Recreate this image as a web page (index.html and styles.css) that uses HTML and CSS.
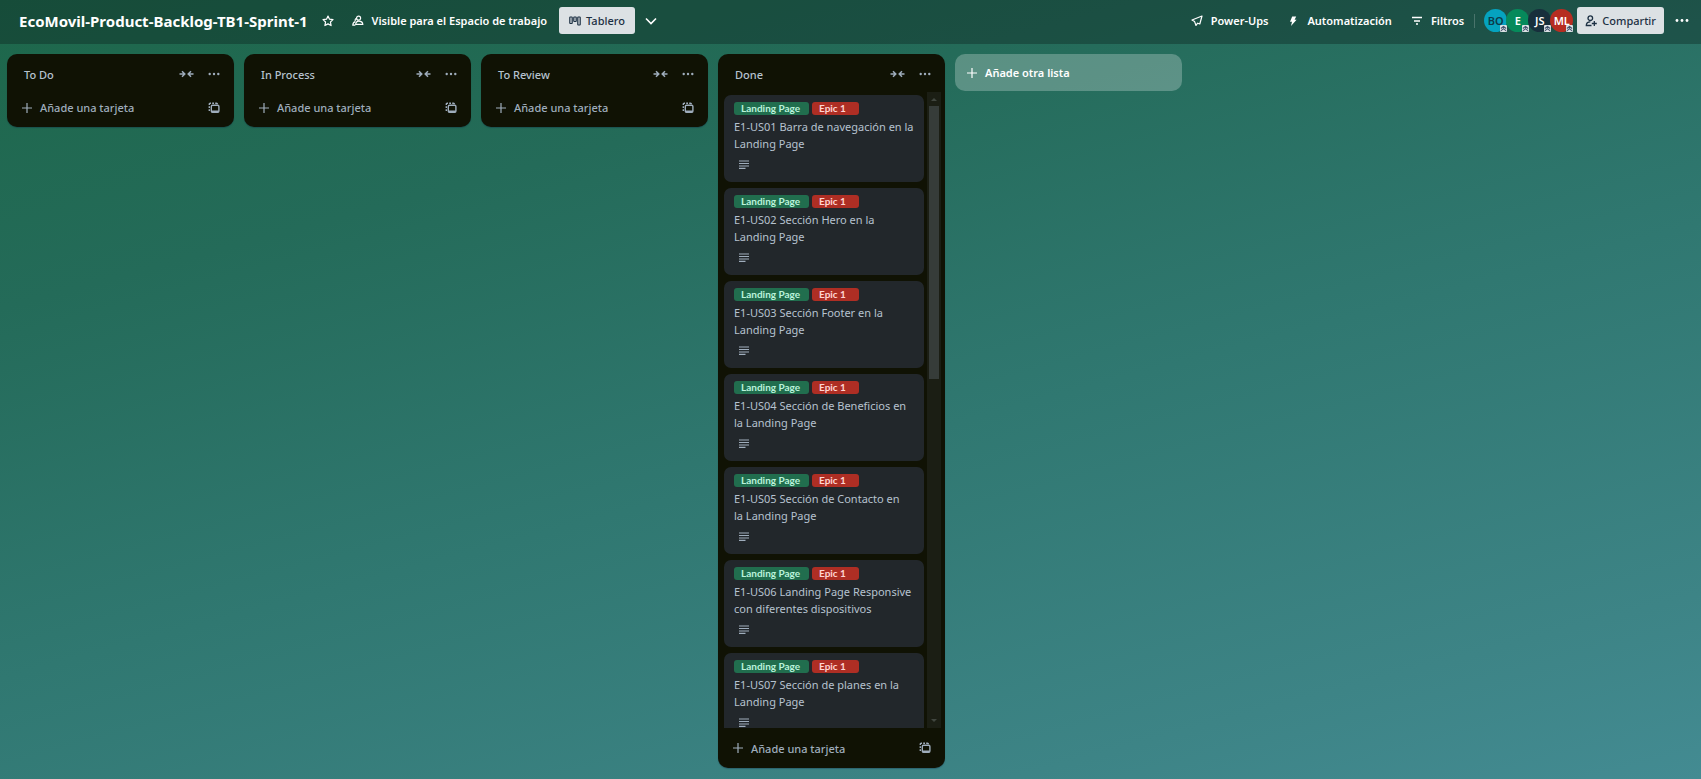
FILE: index.html
```html
<!DOCTYPE html>
<html lang="es">
<head>
<meta charset="utf-8">
<meta name="viewport" content="width=device-width, initial-scale=1">
<title>EcoMovil-Product-Backlog-TB1-Sprint-1</title>
<link rel="stylesheet" href="styles.css">
</head>
<body>
<svg class="sprite" aria-hidden="true">
  <symbol id="i-collapse" viewBox="0 0 15 10"><path d="M.5 5H6M3 2.200L5.800 5 3 7.800M14.500 5H9M12 2.200L9.200 5 12 7.800" fill="none" stroke="currentColor" stroke-width="1.500"/></symbol>
  <symbol id="i-dots" viewBox="0 0 12 4"><circle cx="1.7" cy="2" r="1.2"/><circle cx="6" cy="2" r="1.2"/><circle cx="10.3" cy="2" r="1.2"/></symbol>
  <symbol id="i-plus" viewBox="0 0 10 10"><path d="M5 0v10M0 5h10" fill="none" stroke="currentColor" stroke-width="1.2"/></symbol>
  <symbol id="i-template" viewBox="0 0 12 12"><rect x="3.300" y="3.300" width="7.600" height="7" rx="1.200" fill="none" stroke="currentColor" stroke-width="1.400"/><path d="M3.500 8.500h7.200v1.800H3.500z"/><path d="M1.300 9V7.200M1.300 6V4.200M1.300 3V2.200q0-.9.9-.9H3M4.200 1.300H6M7.200 1.300h1.300q.9 0 .9.900" fill="none" stroke="currentColor" stroke-width="1.400"/></symbol>
  <symbol id="i-desc" viewBox="0 0 10 9"><path d="M0 1h10M0 3.5h10M0 6h10M0 8.4h6.500" fill="none" stroke="currentColor" stroke-width="1.2"/></symbol>
  <symbol id="i-admin" viewBox="0 0 8 8"><path d="M1 4l3-2.500L7 4M1 6.700l3-2.500 3 2.500" fill="none" stroke="currentColor" stroke-width="1.200"/></symbol>
</svg>

<header class="topbar">
  <div class="group">
    <h1 class="board-name">EcoMovil-Product-Backlog-TB1-Sprint-1</h1>
    <button class="ghost star" type="button" aria-label="Marcar como favorito"><svg width="12" height="12" viewBox="0 0 12 12"><path d="M6 1l1.500 3.200 3.500.45-2.550 2.400.65 3.500L6 8.850l-3.100 1.700.65-3.500L1 4.650l3.500-.45z" fill="none" stroke="currentColor" stroke-width="1.200" stroke-linejoin="round"/></svg></button>
    <button class="ghost" type="button"><svg width="12" height="12" viewBox="0 0 12 12"><g fill="none" stroke="currentColor" stroke-width="1.200"><circle cx="6.600" cy="3.200" r="2"/><path d="M3.700 9.400C3.700 7.200 5 6.200 6.800 6.200s4 1 4 3.200z"/><path d="M4.700 3.600C3.200 3.400 2.800 5 3.400 6.300M3.400 6.600C1.800 7 .8 8.300.8 10.200h2.600"/></g></svg>Visible para el Espacio de trabajo</button>
    <button class="solid" type="button"><svg width="12" height="12" viewBox="0 0 12 12"><g fill="none" stroke="currentColor" stroke-width="1.200"><rect x=".8" y="2" width="2.400" height="6.500" rx=".5"/><rect x="4.800" y="2" width="2.400" height="4.500" rx=".5"/><rect x="8.800" y="2" width="2.400" height="8" rx=".5"/></g></svg>Tablero</button>
    <button class="ghost" type="button" aria-label="Vistas"><svg width="12" height="12" viewBox="0 0 12 12"><path d="M1 3.500l5 5 5-5" fill="none" stroke="currentColor" stroke-width="1.600"/></svg></button>
  </div>
  <div class="group tools">
    <button class="ghost" type="button"><svg width="12" height="12" viewBox="0 0 12 12"><path d="M11 1L1 5l2.600 1.600L5 10.500l1.600-2.300L8.800 9z" fill="none" stroke="currentColor" stroke-width="1.200" stroke-linejoin="round"/></svg>Power-Ups</button>
    <button class="ghost" type="button"><svg width="12" height="12" viewBox="0 0 12 12"><path d="M5.200 1.500h4L7.600 4.800h2L4 11l1-4.300H3z" fill="currentColor"/></svg>Automatización</button>
    <button class="ghost" type="button"><svg width="12" height="12" viewBox="0 0 12 12"><path d="M1 2.500h10M3 6h6M5 9h2" fill="none" stroke="currentColor" stroke-width="1.400"/></svg>Filtros</button>
    <span class="divider"></span>
    <div class="members">
      <span class="avatar bo">BO<svg class="badge"><use href="#i-admin"/></svg></span>
      <span class="avatar e">E<svg class="badge"><use href="#i-admin"/></svg></span>
      <span class="avatar js">JS<svg class="badge"><use href="#i-admin"/></svg></span>
      <span class="avatar ml">ML<svg class="badge"><use href="#i-admin"/></svg></span>
    </div>
    <button class="solid share" type="button"><svg width="12" height="12" viewBox="0 0 12 12"><g fill="none" stroke="currentColor" stroke-width="1.300"><circle cx="5.300" cy="3.200" r="2.300"/><path d="M6.500 10.500H1.300C1.300 8 2.600 6.900 5.300 6.900M9.300 6v5M6.800 8.500h5"/></g></svg>Compartir</button>
    <button class="ghost more" type="button" aria-label="Menú"><svg width="14" height="5" viewBox="0 0 12 4" fill="currentColor"><use href="#i-dots"/></svg></button>
  </div>
</header>

<main class="board">
  <section class="list">
    <div class="list-head"><h2>To Do</h2><button type="button" aria-label="Contraer"><svg class="collapse"><use href="#i-collapse"/></svg></button><button type="button" aria-label="Acciones"><svg class="dots"><use href="#i-dots"/></svg></button></div>
    <div class="list-foot"><button class="add" type="button"><svg class="plus"><use href="#i-plus"/></svg>Añade una tarjeta</button><button type="button" aria-label="Plantilla"><svg class="template"><use href="#i-template"/></svg></button></div>
  </section>
  <section class="list">
    <div class="list-head"><h2>In Process</h2><button type="button" aria-label="Contraer"><svg class="collapse"><use href="#i-collapse"/></svg></button><button type="button" aria-label="Acciones"><svg class="dots"><use href="#i-dots"/></svg></button></div>
    <div class="list-foot"><button class="add" type="button"><svg class="plus"><use href="#i-plus"/></svg>Añade una tarjeta</button><button type="button" aria-label="Plantilla"><svg class="template"><use href="#i-template"/></svg></button></div>
  </section>
  <section class="list">
    <div class="list-head"><h2>To Review</h2><button type="button" aria-label="Contraer"><svg class="collapse"><use href="#i-collapse"/></svg></button><button type="button" aria-label="Acciones"><svg class="dots"><use href="#i-dots"/></svg></button></div>
    <div class="list-foot"><button class="add" type="button"><svg class="plus"><use href="#i-plus"/></svg>Añade una tarjeta</button><button type="button" aria-label="Plantilla"><svg class="template"><use href="#i-template"/></svg></button></div>
  </section>
  <section class="list">
    <div class="list-head"><h2>Done</h2><button type="button" aria-label="Contraer"><svg class="collapse"><use href="#i-collapse"/></svg></button><button type="button" aria-label="Acciones"><svg class="dots"><use href="#i-dots"/></svg></button></div>
    <div class="scroll">
      <div class="cards">
        <article class="card"><div class="labels"><span class="label green">Landing Page</span><span class="label red">Epic 1</span></div><p>E1-US01 Barra de navegación en la Landing Page</p><svg class="desc"><use href="#i-desc"/></svg></article>
        <article class="card"><div class="labels"><span class="label green">Landing Page</span><span class="label red">Epic 1</span></div><p>E1-US02 Sección Hero en la Landing Page</p><svg class="desc"><use href="#i-desc"/></svg></article>
        <article class="card"><div class="labels"><span class="label green">Landing Page</span><span class="label red">Epic 1</span></div><p>E1-US03 Sección Footer en la Landing Page</p><svg class="desc"><use href="#i-desc"/></svg></article>
        <article class="card"><div class="labels"><span class="label green">Landing Page</span><span class="label red">Epic 1</span></div><p>E1-US04 Sección de Beneficios en la Landing Page</p><svg class="desc"><use href="#i-desc"/></svg></article>
        <article class="card"><div class="labels"><span class="label green">Landing Page</span><span class="label red">Epic 1</span></div><p>E1-US05 Sección de Contacto en<br>la Landing Page</p><svg class="desc"><use href="#i-desc"/></svg></article>
        <article class="card"><div class="labels"><span class="label green">Landing Page</span><span class="label red">Epic 1</span></div><p>E1-US06 Landing Page Responsive con diferentes dispositivos</p><svg class="desc"><use href="#i-desc"/></svg></article>
        <article class="card"><div class="labels"><span class="label green">Landing Page</span><span class="label red">Epic 1</span></div><p>E1-US07 Sección de planes en la Landing Page</p><svg class="desc"><use href="#i-desc"/></svg></article>
      </div>
      <div class="track" aria-hidden="true"><span class="arrow up"></span><span class="thumb"></span><span class="arrow down"></span></div>
    </div>
    <div class="list-foot"><button class="add" type="button"><svg class="plus"><use href="#i-plus"/></svg>Añade una tarjeta</button><button type="button" aria-label="Plantilla"><svg class="template"><use href="#i-template"/></svg></button></div>
  </section>
  <button class="add-list" type="button"><svg class="plus"><use href="#i-plus"/></svg>Añade otra lista</button>
</main>
</body>
</html>
```
FILE: styles.css
```css
* { box-sizing: border-box; }

body {
  margin: 0;
  height: 100vh;
  display: flex;
  flex-direction: column;
  overflow: hidden;
  background: linear-gradient(165deg, #1d674a 0%, #246b59 25%, #307871 55%, #3d8486 85%, #438b92 100%);
  color: #b6c2cf;
  font: 11px/17px "Noto Sans", "Open Sans", sans-serif;
}

.sprite { position: absolute; width: 0; height: 0; }

h1, h2, p { margin: 0; }

button {
  margin: 0;
  padding: 0;
  border: 0;
  background: none;
  color: inherit;
  font: inherit;
  display: flex;
  align-items: center;
  cursor: pointer;
}

svg { flex: none; display: block; fill: currentColor; }

.topbar {
  flex: none;
  height: 44px;
  padding: 0 12px 3px 19px;
  display: flex;
  align-items: center;
  justify-content: space-between;
  background: rgba(10, 30, 28, 0.36);
  color: #fff;
}

.group { display: flex; align-items: center; }

.board-name { font-size: 15px; line-height: 20px; font-weight: 700; margin-right: 14px; }

.ghost { gap: 8px; font-weight: 600; white-space: nowrap; }
.ghost.star { margin-right: 18px; }

.solid {
  height: 27px;
  padding: 0 10px;
  gap: 5px;
  border-radius: 3px;
  background: #dce1e4;
  color: #1c3043;
  font-weight: 500;
}
.group > .solid { margin: 0 10px 0 12px; }

.tools { gap: 19px; }
.divider { width: 1px; height: 14px; margin: 0 -10px 0 -9px; background: rgba(255, 255, 255, 0.2); }

.members { display: flex; }
.avatar {
  position: relative;
  width: 23px;
  height: 23px;
  margin-right: -1px;
  display: flex;
  align-items: center;
  justify-content: center;
  border-radius: 50%;
  font-weight: 600;
}
.bo { background: #05a3bf; color: #0c3b4a; }
.e { background: #068a5b; }
.js { background: #172f3c; }
.ml { background: #b62d22; }
.badge {
  position: absolute;
  right: 0;
  bottom: 0;
  width: 7px;
  height: 7px;
  border-radius: 1px;
  background: #dce1e4;
  color: #44546f;
}
.tools > .share { margin: 0 -8px 0 -14px; padding: 0 8px; }

.board {
  flex: 1;
  min-height: 0;
  padding: 10px 7px 11px;
  display: flex;
  align-items: flex-start;
  gap: 10px;
}

.list {
  flex: none;
  width: 227px;
  max-height: 100%;
  display: flex;
  flex-direction: column;
  border-radius: 10px;
  background: #101204;
  box-shadow: 0 1px 1px rgba(9, 30, 66, 0.3);
}

.list-head, .list-foot {
  flex: none;
  display: flex;
  align-items: center;
  padding: 0 14px 0 17px;
}
.list-head { height: 38px; padding-top: 2px; gap: 14px; }
.list-head h2 { flex: 1; font-size: 11px; line-height: 17px; font-weight: 500; }
.list-head button, .list-foot button { color: #9fadbc; }
.list-foot { height: 40px; padding-left: 15px; justify-content: space-between; }
.list-head + .list-foot { height: 35px; padding-bottom: 4px; }
.list-foot .add { gap: 8px; font-weight: 500; }

.collapse { width: 15px; height: 10px; }
.dots { width: 12px; height: 4px; }
.plus { width: 10px; height: 10px; }
.template { width: 12px; height: 12px; }
.desc { width: 10px; height: 9px; margin: 8px 0 0 5px; color: #9fadbc; }

.scroll { flex: 1; min-height: 0; display: flex; gap: 3px; padding: 0 4px 0 6px; overflow: hidden; }

.cards { flex: 1; min-width: 0; padding-top: 3px; display: flex; flex-direction: column; gap: 6px; overflow: hidden; }

.card {
  flex: none;
  padding: 7px 8px 13px 10px;
  border-radius: 7px;
  background: #22272b;
}

.labels { display: flex; gap: 3px; margin-bottom: 3px; }
.label { height: 13px; padding: 0 7px; border-radius: 3px; font: 700 10px/13px Lato, "Noto Sans", sans-serif; white-space: nowrap; }
.green { width: 75px; background: #216e4e; color: #baf3db; }
.red { width: 47px; background: #ae2e24; color: #ffd5d2; }

.track { flex: none; width: 14px; display: flex; flex-direction: column; align-items: center; background: #1b1e14; }
.thumb { width: 10px; height: 43%; background: #363c39; }
.arrow { width: 0; height: 0; border: 3px solid transparent; }
.up { border-bottom-color: #41463f; margin: 3px 0 5px; }
.down { border-top-color: #41463f; margin: auto 0 3px; }

.add-list {
  width: 227px;
  height: 37px;
  padding: 0 12px;
  gap: 8px;
  border-radius: 10px;
  background: rgba(255, 255, 255, 0.25);
  color: #fff;
  font-weight: 600;
}
```
